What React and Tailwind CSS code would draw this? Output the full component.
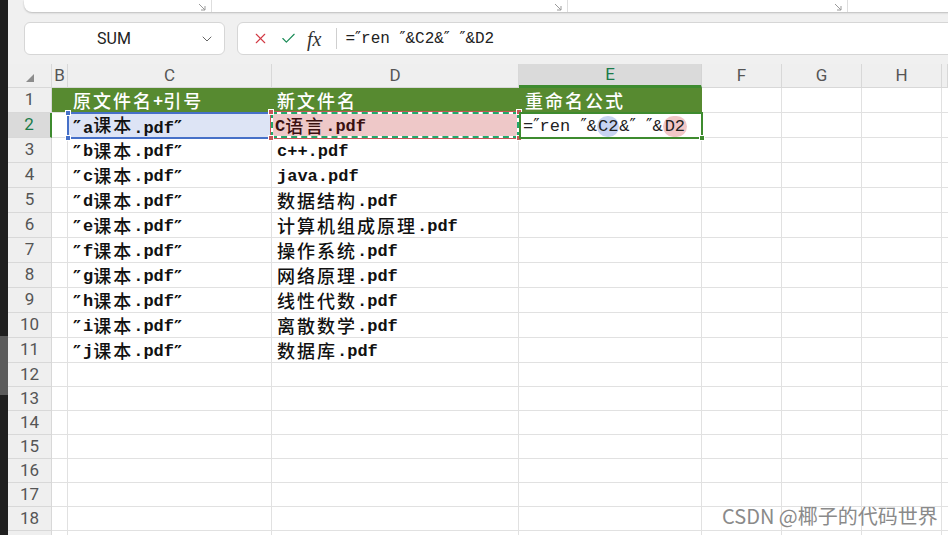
import React from "react";
import { X, Check, ChevronDown } from "lucide-react";

const DATA = [
  ["原文件名+引号", "新文件名", "重命名公式"],
  ["″a课本.pdf″", "C语言.pdf", ""],
  ["″b课本.pdf″", "c++.pdf", ""],
  ["″c课本.pdf″", "java.pdf", ""],
  ["″d课本.pdf″", "数据结构.pdf", ""],
  ["″e课本.pdf″", "计算机组成原理.pdf", ""],
  ["″f课本.pdf″", "操作系统.pdf", ""],
  ["″g课本.pdf″", "网络原理.pdf", ""],
  ["″h课本.pdf″", "线性代数.pdf", ""],
  ["″i课本.pdf″", "离散数学.pdf", ""],
  ["″j课本.pdf″", "数据库.pdf", ""],
];

const COLS = ["B", "C", "D", "E", "F", "G", "H", ""];

function Mixed({ text }) {
  const parts = text.split(/([\u3400-\u9fff]+|″)/).filter(Boolean);
  return parts.map((p, i) => {
    if (p === "″")
      return (
        <span key={i} className="font-['DejaVu_Sans',sans-serif] font-bold text-[18px] inline-block w-[10px]">
          ″
        </span>
      );
    if (/[\u3400-\u9fff]/.test(p))
      return (
        <span key={i} className="relative -top-[1px] font-['Noto_Sans_CJK_SC',sans-serif] font-medium text-[18px] tracking-[2px]">
          {p}
        </span>
      );
    return (
      <span key={i} className="font-['Liberation_Mono','DejaVu_Sans_Mono',monospace] font-bold text-[17px]">
        {p}
      </span>
    );
  });
}

function Q() {
  return <span className="font-['DejaVu_Sans',sans-serif]">″</span>;
}

function Corner({ pos, color }) {
  return <div className={`absolute w-[6px] h-[6px] border border-white ${pos} ${color}`} />;
}

function LauncherIcon() {
  return (
    <svg width="8" height="8" viewBox="0 0 8 8" className="mt-[3px]">
      <path d="M1 1 L7 7 M7 3 L7 7 L3 7" stroke="#9a9a9a" strokeWidth="1" fill="none" />
    </svg>
  );
}

export default function App() {
  const rowNums = Array.from({ length: 19 }, (_, i) => i + 1);
  return (
    <div className="relative w-[948px] h-[535px] overflow-hidden flex bg-white font-['Roboto','Liberation_Sans',sans-serif]">
      {/* left dark strip */}
      <div className="w-[8px] shrink-0 bg-[#1f1f1f] flex flex-col">
        <div className="h-[336px] shrink-0" />
        <div className="h-[59px] shrink-0 bg-[#5b5b5b]" />
      </div>

      <div className="flex-1 min-w-0 flex flex-col">
        {/* toolbar area */}
        <div className="h-[64px] shrink-0 bg-[#f0f0f0] flex flex-col">
          <div className="ml-[16px] -mr-[10px] h-[12px] shrink-0 bg-white rounded-b-[8px] shadow-[0_1px_2px_rgba(0,0,0,0.22)] flex">
            <div className="w-[188px] flex justify-end pr-[5px] border-r border-[#dedede]">
              <LauncherIcon />
            </div>
            <div className="w-[356px] flex justify-end pr-[5px] border-r border-[#dedede]">
              <LauncherIcon />
            </div>
            <div className="w-[280px] flex justify-end pr-[5px] border-r border-[#dedede]">
              <LauncherIcon />
            </div>
            <div className="flex-1" />
          </div>
          <div className="mt-[10px] h-[33px] shrink-0 flex gap-[12px] ml-[16px] -mr-[10px]">
            <div className="w-[201px] bg-white border border-[#d6d6d6] rounded-[6px] flex items-center">
              <span className="flex-1 text-center pl-[4px] text-[16px] text-[#222]">SUM</span>
              <ChevronDown size={16} strokeWidth={1.5} color="#666" className="mr-[9px]" />
            </div>
            <div className="flex-1 bg-white border border-[#d6d6d6] rounded-[6px] flex items-center pl-[14px]">
              <X size={17} strokeWidth={1.6} color="#d23a44" />
              <Check size={17} strokeWidth={1.6} color="#188a55" className="ml-[11px]" />
              <span className="ml-[10px] font-['Liberation_Serif',serif] italic text-[20px] text-[#333] leading-none">
                fx
              </span>
              <div className="ml-[15px] w-px h-[21px] bg-[#cfcfcf]" />
              <div className="ml-[8px] font-['Liberation_Mono','DejaVu_Sans_Mono',monospace] text-[16px] text-[#222] whitespace-pre">
                =<Q />ren <Q />&amp;C2&amp;<Q />{" "}<Q />&amp;D2
              </div>
            </div>
          </div>
        </div>

        {/* sheet grid */}
        <div className="shrink-0 grid grid-cols-[44px_16px_204px_247px_183px_80px_80px_80px_1fr]">
          {/* header row */}
          <div className="relative h-[24px] bg-[#efefef] border-r border-b border-[#d8d8d8]">
            <svg width="8" height="8" viewBox="0 0 8 8" className="absolute left-[18px] top-[10px]">
              <polygon points="8,0 8,8 0,8" fill="#8c8c8c" />
            </svg>
          </div>
          {COLS.map((c, i) =>
            c === "E" ? (
              <div
                key={i}
                className="h-[24px] bg-[#dadada] border-r border-[#d4d4d4] border-b-[3px] border-b-[#3e8b2f] flex items-center justify-center text-[17px] text-[#1b7a49]"
              >
                {c}
              </div>
            ) : (
              <div
                key={i}
                className="h-[24px] bg-[#efefef] border-r border-b border-[#d8d8d8] flex items-center justify-center text-[17px] text-[#555]"
              >
                {c}
              </div>
            )
          )}

          {rowNums.map((r) => {
            const h = r <= 11 ? "h-[25px]" : "h-[24px]";
            const row = DATA[r - 1];
            const header =
              r === 2 ? (
                <div
                  key={`h${r}`}
                  className={`${h} bg-[#dadada] border-b border-[#d8d8d8] border-r-2 border-r-[#3e8b2f] flex items-center justify-center text-[17px] text-[#1b7a49]`}
                >
                  {r}
                </div>
              ) : (
                <div
                  key={`h${r}`}
                  className={`${h} bg-[#efefef] border-r border-b border-[#d8d8d8] flex items-center justify-center text-[17px] text-[#555]`}
                >
                  {r < 19 ? r : null}
                </div>
              );

            if (r === 1) {
              return (
                <React.Fragment key={r}>
                  {header}
                  <div className="h-[25px] bg-[#578a30] border-b border-[#e1e1e1]" />
                  <div className="h-[25px] bg-[#578a30] border-b border-[#e1e1e1] flex items-center pl-[5px] pt-[3px] text-white">
                    <Mixed text={row[0]} />
                  </div>
                  <div className="h-[25px] bg-[#578a30] border-b border-[#e1e1e1] flex items-center pl-[5px] pt-[3px] text-white">
                    <Mixed text={row[1]} />
                  </div>
                  <div className="h-[25px] bg-[#578a30] border-b border-[#e1e1e1] flex items-center pl-[6px] pt-[3px] text-white">
                    <Mixed text={row[2]} />
                  </div>
                  <div className="h-[25px] border-r border-b border-[#e1e1e1]" />
                  <div className="h-[25px] border-r border-b border-[#e1e1e1]" />
                  <div className="h-[25px] border-r border-b border-[#e1e1e1]" />
                  <div className="h-[25px] border-b border-[#e1e1e1]" />
                </React.Fragment>
              );
            }

            if (r === 2) {
              return (
                <React.Fragment key={r}>
                  {header}
                  <div className="h-[25px] border-r border-b border-[#e1e1e1]" />
                  <div className="relative h-[25px] bg-[#dde4f5] flex items-center pl-[5px] pt-[3px] text-[#111]">
                    <div className="absolute -left-[1px] -top-[1px] right-0 -bottom-[1px] border-2 border-[#4670c8]" />
                    <Corner pos="-left-[3px] -top-[3px]" color="bg-[#4670c8]" />
                    <Corner pos="-left-[3px] -bottom-[3px]" color="bg-[#4670c8]" />
                    <span className="relative">
                      <Mixed text={row[0]} />
                    </span>
                  </div>
                  <div className="relative h-[25px]">
                    <div className="absolute -left-[2px] -top-[2px] -right-[1px] -bottom-[1px] border border-[#c65656]">
                      <div className="h-full border-2 border-dashed border-[#21a86a] bg-white">
                        <div className="h-full bg-[#eec8c8] flex items-center pl-[2px] pt-[3px] text-[#3a1010]">
                          <Mixed text={row[1]} />
                        </div>
                      </div>
                      <Corner pos="-left-[3px] -top-[3px]" color="bg-[#c65656]" />
                      <Corner pos="-right-[3px] -top-[3px]" color="bg-[#c65656]" />
                      <Corner pos="-left-[3px] -bottom-[3px]" color="bg-[#c65656]" />
                      <Corner pos="-right-[3px] -bottom-[3px]" color="bg-[#c65656]" />
                    </div>
                  </div>
                  <div className="relative h-[25px]">
                    <div className="absolute left-0 -top-[1px] -right-[1px] -bottom-[1px] border-2 border-[#3e8b2f] flex items-center pl-[2px] pt-[1px]">
                      <div className="font-['Liberation_Mono','DejaVu_Sans_Mono',monospace] text-[17px] leading-[20px] text-[#222] whitespace-pre">
                        =<Q />ren <Q />&amp;<span className="bg-[#c7d4f2] rounded-full px-[1px] py-[1px]">C2</span>&amp;<Q />{" "}<Q />&amp;<span className="bg-[#f1c7c7] rounded-full px-[2px] py-[1px]">D2</span>
                      </div>
                      <div className="absolute -right-[4px] -bottom-[4px] w-[6px] h-[6px] bg-[#3e8b2f] border border-white" />
                    </div>
                  </div>
                  <div className="h-[25px] border-r border-b border-[#e1e1e1]" />
                  <div className="h-[25px] border-r border-b border-[#e1e1e1]" />
                  <div className="h-[25px] border-r border-b border-[#e1e1e1]" />
                  <div className="h-[25px] border-b border-[#e1e1e1]" />
                </React.Fragment>
              );
            }

            return (
              <React.Fragment key={r}>
                {header}
                <div className={`${h} border-r border-b border-[#e1e1e1]`} />
                <div className={`${h} border-r border-b border-[#e1e1e1] flex items-center pl-[5px] pt-[3px] text-[#111] whitespace-nowrap`}>
                  {row ? <Mixed text={row[0]} /> : null}
                </div>
                <div className={`${h} border-r border-b border-[#e1e1e1] flex items-center pl-[5px] pt-[3px] text-[#111] whitespace-nowrap`}>
                  {row ? <Mixed text={row[1]} /> : null}
                </div>
                <div className={`${h} border-r border-b border-[#e1e1e1]`} />
                <div className={`${h} border-r border-b border-[#e1e1e1]`} />
                <div className={`${h} border-r border-b border-[#e1e1e1]`} />
                <div className={`${h} border-r border-b border-[#e1e1e1]`} />
                <div className={`${h} border-b border-[#e1e1e1]`} />
              </React.Fragment>
            );
          })}
        </div>
      </div>

      {/* watermark */}
      <div className="absolute left-[722px] top-[504px] text-[20px] leading-[24px] text-[#8a8a8a] font-['Noto_Sans_CJK_SC',sans-serif] [text-shadow:0_0_1px_rgba(255,255,255,0.9)] whitespace-nowrap">
        CSDN @椰子的代码世界
      </div>
    </div>
  );
}
